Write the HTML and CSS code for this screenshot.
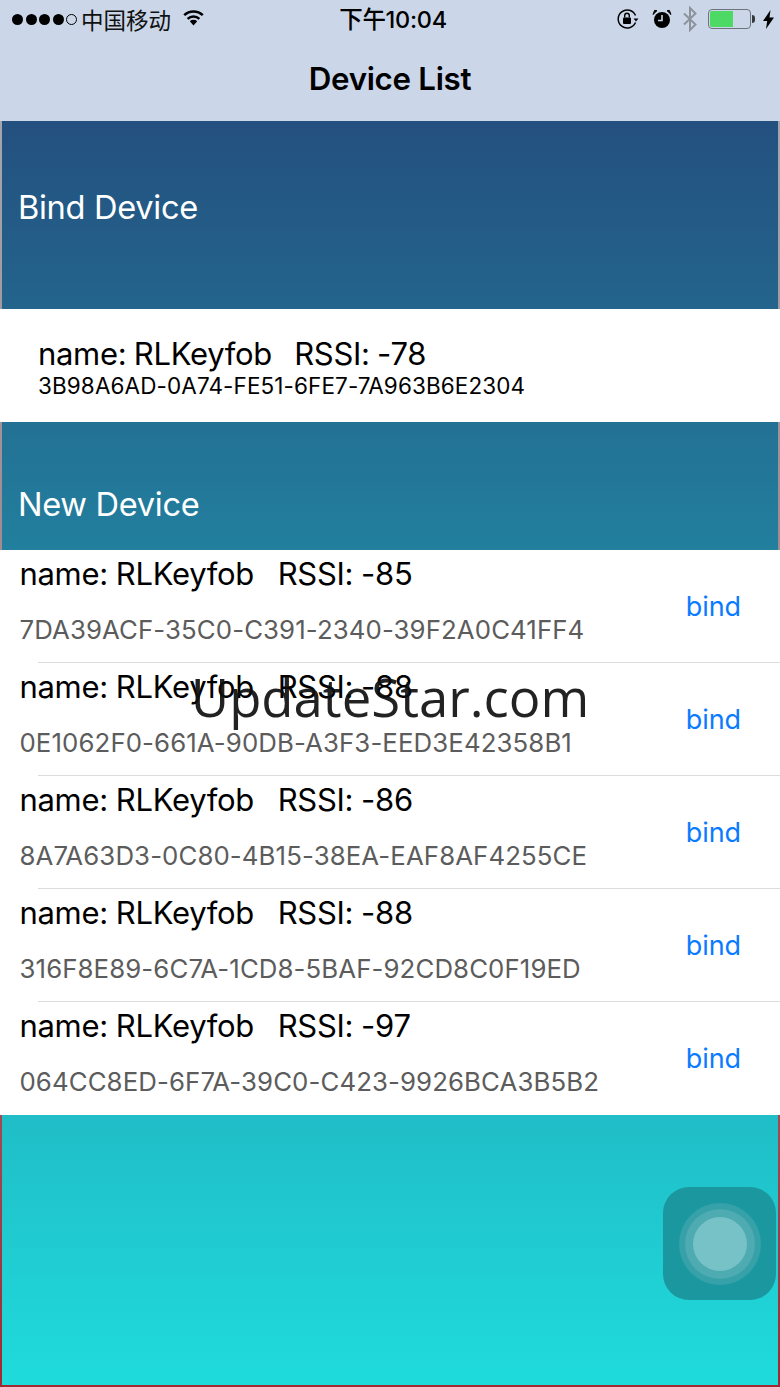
FILE: index.html
```html
<!DOCTYPE html>
<html lang="en">
<head>
<meta charset="utf-8">
<title>Device List</title>
<link rel="stylesheet" href="styles.css">
</head>
<body>
<div class="screen">
  <header class="nav">
    <div class="status">
      <div class="status-left">
        <span class="dots"><i></i><i></i><i></i><i></i><i class="off"></i></span>
        <span class="carrier">中国移动</span>
        <svg class="wifi" width="23" height="17" viewBox="0 0 23 17"><path d="M11.500 16.500 7.800 12.200a5.400 5.400 0 0 1 7.400 0Z" fill="#000"/><path d="M5.600 9.800a8.700 8.700 0 0 1 11.800 0M2.200 6.200a13.500 13.500 0 0 1 18.600 0" fill="none" stroke="#000" stroke-width="2.500"/></svg>
      </div>
      <div class="clock">下午10:04</div>
      <div class="status-right">
        <svg class="lock" width="24" height="22" viewBox="0 0 24 22"><path d="M19.500 14.500A9 9 0 1 1 19.500 7.500" fill="none" stroke="#000" stroke-width="1.500"/><path d="M17.500 10.500h5l-2.500 3Z" fill="#000"/><rect x="7" y="9.500" width="8" height="6.500" rx="1" fill="#000"/><path d="M8.700 9.500V7.500a2.300 2.300 0 0 1 4.600 0v2" fill="none" stroke="#000" stroke-width="1.400"/></svg>
        <svg class="alarm" width="20" height="20" viewBox="0 0 20 20"><circle cx="10" cy="11" r="8" fill="#000"/><path d="M10 6v5.500H6" fill="none" stroke="#cbd7e8" stroke-width="1.600"/><path d="M1 5.500 5 1.600 2.600 1.400ZM19 5.500 15 1.600 17.400 1.400Z" fill="#000" stroke="#000"/></svg>
        <svg class="bt" width="16" height="26" viewBox="0 0 16 26"><path d="M2 7.500 13.500 18.500 8 24V2l5.500 5.500L2 18.500" fill="none" stroke="#8d939c" stroke-width="2"/></svg>
        <div class="battery"><div class="battery-body"><div class="battery-fill"></div></div><div class="battery-tip"></div></div>
        <svg class="bolt" width="11" height="19" viewBox="0 0 11 19"><path d="M7.500 0 0 11h4.200L3 19l8-11.500H6.500Z" fill="#000"/></svg>
      </div>
    </div>
    <h1 class="title">Device List</h1>
  </header>

  <main class="content">
    <section class="section-head section-head-bind"><h2>Bind Device</h2></section>
    <div class="bound">
      <div class="bound-name">name: RLKeyfob&nbsp;&nbsp; RSSI: -78</div>
      <div class="bound-id">3B98A6AD-0A74-FE51-6FE7-7A963B6E2304</div>
    </div>
    <section class="section-head section-head-new"><h2>New Device</h2></section>
    <ul class="devices">
      <li class="device"><div class="device-text"><div class="device-name">name: RLKeyfob&nbsp;&nbsp; RSSI: -85</div><div class="device-id">7DA39ACF-35C0-C391-2340-39F2A0C41FF4</div></div><a class="bind">bind</a></li>
      <li class="device"><div class="device-text"><div class="device-name">name: RLKeyfob&nbsp;&nbsp; RSSI: -88</div><div class="device-id">0E1062F0-661A-90DB-A3F3-EED3E42358B1</div></div><a class="bind">bind</a></li>
      <li class="device"><div class="device-text"><div class="device-name">name: RLKeyfob&nbsp;&nbsp; RSSI: -86</div><div class="device-id">8A7A63D3-0C80-4B15-38EA-EAF8AF4255CE</div></div><a class="bind">bind</a></li>
      <li class="device"><div class="device-text"><div class="device-name">name: RLKeyfob&nbsp;&nbsp; RSSI: -88</div><div class="device-id">316F8E89-6C7A-1CD8-5BAF-92CD8C0F19ED</div></div><a class="bind">bind</a></li>
      <li class="device"><div class="device-text"><div class="device-name">name: RLKeyfob&nbsp;&nbsp; RSSI: -97</div><div class="device-id">064CC8ED-6F7A-39C0-C423-9926BCA3B5B2</div></div><a class="bind">bind</a></li>
    </ul>
    <div class="filler"></div>
  </main>

  <div class="watermark">UpdateStar.com</div>
  <div class="assist"><div class="assist-ring"><div class="assist-mid"><div class="assist-core"></div></div></div></div>
</div>
</body>
</html>
```
FILE: styles.css
```css
* { box-sizing: border-box; }
html, body { margin: 0; padding: 0; }
body { font-family: Inter, "Noto Sans CJK SC", sans-serif; background: #fff; }
.screen { position: relative; width: 780px; height: 1387px; overflow: hidden; display: flex; flex-direction: column; }

.nav { height: 121px; flex: none; background: #cbd7e8; display: flex; flex-direction: column; }
.status { height: 38px; display: flex; align-items: center; justify-content: space-between; position: relative; padding: 0 6px 0 12px; color: #000; }
.status-left { display: flex; align-items: center; }
.dots { display: flex; gap: 2.500px; }
.dots i { width: 11px; height: 11px; border-radius: 50%; background: #000; display: block; }
.dots i.off { background: none; border: 1px solid #000; }
.carrier { font: 22.500px/28px "Noto Sans CJK SC", sans-serif; margin-left: 4px; color: #111; }
.wifi { margin-left: 11px; margin-top: -3px; }
.clock { position: absolute; left: 6px; right: 0; top: 6px; text-align: center; font: 500 23.500px/28px Inter, "Noto Sans CJK SC", sans-serif; letter-spacing: -0.3px; }
.status-right { display: flex; align-items: center; }
.lock { margin-right: 12px; }
.alarm { margin-right: 10px; }
.bt { margin-right: 10px; }
.battery { display: flex; align-items: center; margin-right: 8px; }
.battery-body { width: 43px; height: 20px; border: 1px solid #6d737b; border-radius: 4px; padding: 1px; }
.battery-fill { width: 23px; height: 100%; background: #4cd964; border-radius: 2px 0 0 2px; }
.battery-tip { width: 3px; height: 8px; background: #33383f; border-radius: 0 3px 3px 0; margin-left: 1px; }
.title { margin: 22px 0 0; font: 600 31.300px/38px Inter, sans-serif; text-align: center; color: #000; letter-spacing: -0.3px; }

.content { flex: 1; display: flex; flex-direction: column; background: linear-gradient(180deg, #24507f 0%, #1fdbdb 100%); border: 2px solid; border-top-width: 0; border-image: linear-gradient(180deg, #a3a7ad 0%, #a3858c 40%, #a02a33 100%) 1; position: relative; }
.section-head { flex: none; display: flex; align-items: flex-end; padding-left: 16px; }
.section-head h2 { margin: 0; font: 400 32.600px/40px Inter, sans-serif; color: #fff; letter-spacing: -0.3px; }
.section-head-bind { height: 188px; padding-bottom: 82px; }
.section-head-new { height: 128px; padding-bottom: 26px; }

.bound { flex: none; height: 113px; margin: 0 -2px; background: #fff; padding: 27px 0 0 38px; color: #000; }
.bound-name { font: 400 31px/36px Inter, sans-serif; letter-spacing: -0.3px; word-spacing: -1px; }
.bound-id { font: 400 22.500px/28px Inter, sans-serif; letter-spacing: 0.1px; }

.devices { flex: none; list-style: none; margin: 0 -2px; padding: 0; background: #fff; }
.device { position: relative; height: 113px; display: flex; align-items: center; justify-content: space-between; padding: 0 39px 0 19.500px; }
.device + .device::before { content: ""; position: absolute; top: -1px; left: 38px; right: 0; height: 1px; background: #dcdcde; }
.device-text { display: flex; flex-direction: column; align-self: flex-start; padding-top: 5px; }
.device-name { font: 400 31px/38px Inter, sans-serif; color: #000; letter-spacing: -0.3px; word-spacing: -0.5px; }
.device-id { font: 400 25.800px/32px Inter, sans-serif; color: #5c5c5c; margin-top: 20.500px; letter-spacing: 0.1px; }
.bind { font: 400 27px/36px Inter, sans-serif; color: #0a7aff; letter-spacing: -0.1px; padding-top: 1px; }
.filler { flex: 1; }

.watermark { position: absolute; left: 0; right: 0; top: 667px; text-align: center; font: 400 52.700px/60px "Open Sans", sans-serif; color: rgba(15,15,15,0.92); }
.assist { position: absolute; left: 663px; top: 1187px; width: 113px; height: 113px; border-radius: 26px; background: #1b989f; display: flex; align-items: center; justify-content: center; }
.assist-ring { width: 82px; height: 82px; border-radius: 50%; background: #36a1a8; display: flex; align-items: center; justify-content: center; }
.assist-mid { width: 70px; height: 70px; border-radius: 50%; background: #4dabb1; display: flex; align-items: center; justify-content: center; }
.assist-core { width: 54px; height: 54px; border-radius: 50%; background: #77c2c6; }
```
